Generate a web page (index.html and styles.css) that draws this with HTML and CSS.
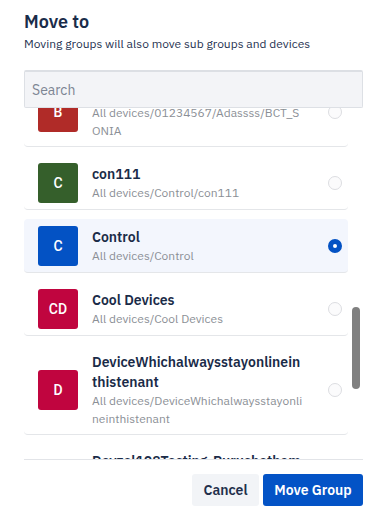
FILE: index.html
```html
<!DOCTYPE html>
<html lang="en">
<head>
<meta charset="utf-8">
<title>Move to</title>
<link rel="stylesheet" href="styles.css">
</head>
<body>
<div class="dialog">
  <header class="head">
    <h1 class="title">Move to</h1>
    <p class="desc">Moving groups will also move sub groups and devices</p>
  </header>
  <div class="search">
    <input class="search-input" type="text" placeholder="Search">
  </div>
  <div class="viewport">
    <div class="list" id="list">
      <div class="row">
        <div class="avatar red">B</div>
        <div class="text">
          <div class="name">BCT_SONIA</div>
          <div class="path">All devices/01234567/Adassss/BCT_SONIA</div>
        </div>
        <span class="radio"></span>
      </div>
      <div class="row">
        <div class="avatar green">C</div>
        <div class="text">
          <div class="name">con111</div>
          <div class="path">All devices/Control/con111</div>
        </div>
        <span class="radio"></span>
      </div>
      <div class="row selected">
        <div class="avatar blue">C</div>
        <div class="text">
          <div class="name">Control</div>
          <div class="path">All devices/Control</div>
        </div>
        <span class="radio checked"></span>
      </div>
      <div class="row">
        <div class="avatar crimson">CD</div>
        <div class="text">
          <div class="name">Cool Devices</div>
          <div class="path">All devices/Cool Devices</div>
        </div>
        <span class="radio"></span>
      </div>
      <div class="row">
        <div class="avatar crimson">D</div>
        <div class="text">
          <div class="name">DeviceWhichalwaysstayonlineinthistenant</div>
          <div class="path">All devices/DeviceWhichalwaysstayonlineinthistenant</div>
        </div>
        <span class="radio"></span>
      </div>
      <div class="row">
        <div class="avatar crimson">D</div>
        <div class="text">
          <div class="name">Devzel108Testing-Purushotham</div>
          <div class="path">All devices/Devzel108Testing-Purushotham</div>
        </div>
        <span class="radio"></span>
      </div>
    </div>
    <div class="thumb"></div>
  </div>
  <footer class="foot">
    <button class="btn btn-cancel">Cancel</button>
    <button class="btn btn-primary">Move Group</button>
  </footer>
</div>
<script src="script.js"></script>
</body>
</html>
```

FILE: styles.css
```css
* { box-sizing: border-box; }
html, body { margin: 0; background: #fff; }
body {
  font-family: "IBM Plex Sans", Inter, "Noto Sans", sans-serif;
  color: #1b2b47;
}
.dialog {
  width: 390px;
  height: 520px;
  padding: 10px 27px 0 24px;
  display: flex;
  flex-direction: column;
}
.title {
  margin: 0;
  font-size: 18px;
  line-height: 24px;
  font-weight: 600;
  color: #1a2c4a;
}
.desc {
  margin: 2px 0 0;
  font-size: 12px;
  line-height: 16px;
  color: #1f3352;
}
.search {
  margin-top: 18px;
}
.search-input {
  display: block;
  width: 100%;
  height: 38px;
  border: 1px solid #dde0e5;
  border-top: 2px solid #dcdfe4;
  border-radius: 2px;
  background: #f3f4f7;
  padding: 0 7px;
  font-family: inherit;
  font-size: 14px;
  color: #1b2b47;
  outline: none;
}
.search-input::placeholder { color: #7c8593; }
.viewport {
  position: relative;
  height: 351px;
}
.list {
  height: 100%;
  overflow: hidden;
  padding-right: 15px;
}
.row {
  display: flex;
  align-items: center;
  gap: 14px;
  padding: 7px 6px 6px 14px;
  border-bottom: 1px solid #e4e6e9;
  border-radius: 4px;
  margin-bottom: 9px;
  background: #fff;
}
.row.selected { background: #f3f6fd; }
.avatar {
  flex: 0 0 40px;
  height: 40px;
  border-radius: 3px;
  color: #fff;
  font-family: Roboto, "Liberation Sans", sans-serif;
  font-size: 14px;
  font-weight: 500;
  display: flex;
  align-items: center;
  justify-content: center;
}
.red { background: #b02b28; }
.green { background: #355f2b; }
.blue { background: #0352c4; }
.crimson { background: #c0053f; }
.text {
  flex: 1;
  min-width: 0;
  word-break: break-all;
  padding-right: 10px;
}
.name {
  font-size: 14px;
  line-height: 20px;
  font-weight: 600;
  color: #1a2b48;
}
.path {
  font-size: 12px;
  line-height: 18px;
  color: #8b8f96;
}
.radio {
  flex: 0 0 14px;
  height: 14px;
  border-radius: 50%;
  border: 1.5px solid #dcdde1;
  background: #fbfbfc;
}
.radio.checked {
  border: 5px solid #0352c4;
  background: #fff;
}
.thumb {
  position: absolute;
  left: 328px;
  top: 199px;
  width: 8px;
  height: 82px;
  border-radius: 4px;
  background: #808080;
}
.foot {
  border-top: 1px solid #e2e4e8;
  padding-top: 14px;
  display: flex;
  justify-content: flex-end;
  gap: 4px;
}
.btn {
  height: 32px;
  border: 0;
  border-radius: 3px;
  padding: 0;
  white-space: nowrap;
  font-family: inherit;
  font-size: 14px;
  font-weight: 600;
}
.btn-cancel { background: #f2f4f7; color: #1f2f4b; width: 67px; }
.btn-primary { background: #0353c6; color: #fff; width: 100px; }
```

FILE: script.js
```js
document.getElementById('list').scrollTop = 31;
```
